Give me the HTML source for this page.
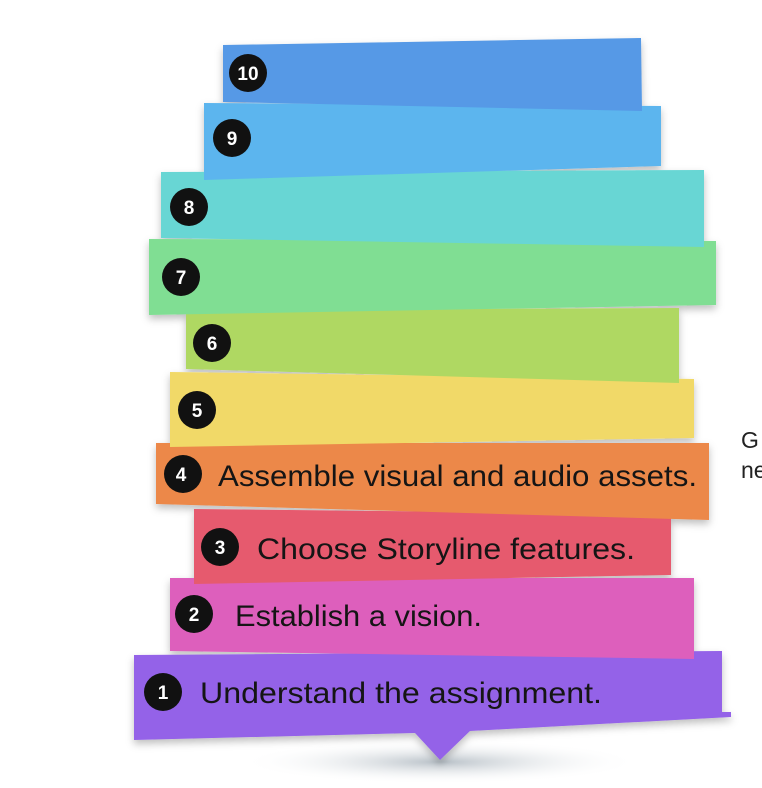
<!DOCTYPE html>
<html><head><meta charset="utf-8"><style>
html,body{margin:0;padding:0;background:#fff;}
svg{display:block;}
.n{font-family:"Liberation Sans",sans-serif;font-weight:bold;font-size:19px;fill:#fff;text-anchor:middle;}
.t{font-family:"Liberation Sans",sans-serif;font-size:30px;fill:#151515;}
</style></head><body>
<svg width="762" height="788" viewBox="0 0 762 788">
<defs>
<filter id="sh" x="-10%" y="-20%" width="120%" height="150%"><feDropShadow dx="0" dy="4" stdDeviation="4" flood-color="#000" flood-opacity="0.25"/></filter>
<radialGradient id="g" cx="50%" cy="50%" r="50%"><stop offset="0" stop-color="#9aa6b0" stop-opacity="0.7"/><stop offset="1" stop-color="#fff" stop-opacity="0"/></radialGradient>
</defs>
<ellipse cx="440" cy="762" rx="200" ry="22" fill="url(#g)"/>
<g filter="url(#sh)">
<polygon points="134,655 722,651 722,712 731,712 731,717 470,731 440,760 415,733 134,740" fill="#9462e8"/>
<polygon points="170,578 694,578 694,659 170,651" fill="#dd5fbc"/>
<polygon points="194,509 671,514 671,575 194,584" fill="#e65a6e"/>
<polygon points="156,443 709,443 709,520 156,504" fill="#ec884a"/>
<polygon points="170,372 694,379 694,438 170,447" fill="#f1d967"/>
<polygon points="186,310 679,308 679,383 186,369" fill="#afd862"/>
<polygon points="149,239 716,241 716,305 149,315" fill="#80de93"/>
<polygon points="161,172 704,170 704,247 161,238" fill="#68d6d4"/>
<polygon points="204,103 661,106 661,166 204,180" fill="#5cb5ee"/>
<polygon points="223,45 641,38 642,111 223,102" fill="#5699e6"/>
</g>
<g fill="#111">
<circle cx="248" cy="73" r="19"/><circle cx="232" cy="138" r="19"/>
<circle cx="189" cy="207" r="19"/><circle cx="181" cy="277" r="19"/>
<circle cx="212" cy="343" r="19"/><circle cx="197" cy="410" r="19"/>
<circle cx="183" cy="474" r="19"/><circle cx="220" cy="547" r="19"/>
<circle cx="194" cy="614" r="19"/><circle cx="163" cy="692" r="19"/>
</g>
<text class="n" x="248" y="80">10</text><text class="n" x="232" y="145">9</text>
<text class="n" x="189" y="214">8</text><text class="n" x="181" y="284">7</text>
<text class="n" x="212" y="350">6</text><text class="n" x="197" y="417">5</text>
<text class="n" x="181" y="481">4</text><text class="n" x="220" y="554">3</text>
<text class="n" x="194" y="621">2</text><text class="n" x="163" y="699">1</text>
<text class="t" x="218" y="486" textLength="479" lengthAdjust="spacingAndGlyphs">Assemble visual and audio assets.</text>
<text class="t" x="257" y="559" textLength="378" lengthAdjust="spacingAndGlyphs">Choose Storyline features.</text>
<text class="t" x="235" y="626" textLength="247" lengthAdjust="spacingAndGlyphs">Establish a vision.</text>
<text class="t" x="200" y="703" textLength="402" lengthAdjust="spacingAndGlyphs">Understand the assignment.</text>
<text font-family="Liberation Sans,sans-serif" font-size="23" fill="#222" x="741" y="448">G</text>
<text font-family="Liberation Sans,sans-serif" font-size="23" fill="#222" x="741" y="478">ne</text>
</svg>
</body></html>
